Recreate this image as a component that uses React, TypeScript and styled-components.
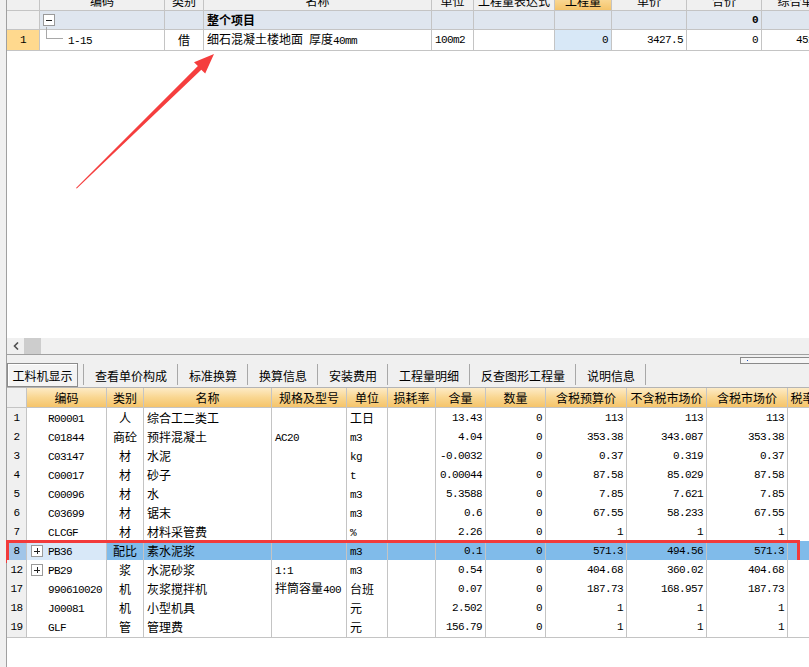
import React from 'react'
import styled, { createGlobalStyle } from 'styled-components'

const GlobalStyle = createGlobalStyle`
  html, body {
    margin: 0;
    padding: 0;
    background: #fff;
  }
  body {
    font-family: 'Noto Sans CJK SC', 'Liberation Sans', sans-serif;
    font-size: 12px;
    color: #000;
  }
`

const LINE = '#c4c4c4'
const ORANGE = 'linear-gradient(to bottom, #fdebc6 0%, #f9d690 50%, #f5c46a 100%)'

const Window = styled.div`
  position: relative;
  width: 809px;
  height: 667px;
  display: flex;
  overflow: hidden;
  background: #fff;
`

const LeftStrip = styled.div`
  flex: 0 0 6px;
  background: #f0f0f0;
  border-right: 1px solid #a0a0a0;
`

const Main = styled.div`
  flex: 1;
  min-width: 0;
  display: flex;
  flex-direction: column;
`

const TopPane = styled.div`
  flex: 0 0 338px;
  overflow: hidden;
`

const TopTable = styled.div`
  margin-top: -9px;
`

const Row = styled.div<{ $cols: string; $bg?: string; $h?: number }>`
  position: relative;
  display: grid;
  grid-template-columns: ${(p) => p.$cols};
  height: ${(p) => p.$h || 19}px;
  background: ${(p) => p.$bg || '#fff'};
`

const Cell = styled.div<{ $align?: 'left' | 'center' | 'right'; $bg?: string; $bold?: boolean }>`
  box-sizing: border-box;
  border-right: 1px solid ${LINE};
  border-bottom: 1px solid ${LINE};
  display: flex;
  align-items: center;
  justify-content: ${(p) => (p.$align === 'right' ? 'flex-end' : p.$align === 'center' ? 'center' : 'flex-start')};
  padding: 0 3px;
  white-space: nowrap;
  line-height: 18px;
  background: ${(p) => p.$bg || 'transparent'};
  font-weight: ${(p) => (p.$bold ? 700 : 400)};
`

const HeadCell = styled(Cell)<{ $hot?: boolean }>`
  justify-content: center;
  background: ${(p) => (p.$hot ? ORANGE : '#f0f0f0')};
`

const Mono = styled.span`
  font-family: 'Liberation Mono', 'DejaVu Sans Mono', monospace;
  font-size: 11px;
  letter-spacing: -0.6px;
  white-space: pre;
`

const ToggleBox = styled.span<{ $open?: boolean }>`
  position: relative;
  flex: 0 0 auto;
  box-sizing: border-box;
  width: 12px;
  height: 12px;
  border: 1px solid #9a9a9a;
  background: #fff;

  &::before {
    content: '';
    position: absolute;
    left: 2px;
    right: 2px;
    top: 4.5px;
    height: 1px;
    background: #222;
  }

  &::after {
    content: '';
    display: ${(p) => (p.$open ? 'none' : 'block')};
    position: absolute;
    top: 2px;
    bottom: 2px;
    left: 4.5px;
    width: 1px;
    background: #222;
  }
`

const BoxSpacer = styled.span`
  flex: 0 0 12px;
`

const Elbow = styled.span`
  align-self: flex-start;
  flex: 0 0 17px;
  height: 12px;
  margin: -3px 0 0 3px;
  box-sizing: border-box;
  border-left: 1px solid #a8a8a8;
  border-bottom: 1px solid #a8a8a8;
`

const CodeText = styled.span`
  margin-left: 5px;
`

const ScrollBar = styled.div`
  flex: 0 0 17px;
  box-sizing: border-box;
  background: #f0f0f0;
  border-bottom: 1px solid #a0a0a0;
  display: flex;
`

const ScrollArrow = styled.div`
  width: 17px;
  display: flex;
  align-items: center;
  justify-content: center;
`

const ScrollThumb = styled.div`
  width: 17px;
  background: #cdcdcd;
`

const TabBar = styled.div`
  flex: 0 0 33px;
  box-sizing: border-box;
  padding-top: 8px;
  background: #f0f0f0;
  border-bottom: 1px solid #b4b4b4;
  display: flex;
  align-items: flex-start;
`

const Tab = styled.div<{ $active?: boolean }>`
  box-sizing: border-box;
  height: 24px;
  display: flex;
  align-items: center;
  justify-content: center;
  white-space: nowrap;
  ${(p) =>
    p.$active
      ? `
    width: 71px;
    border: 1px solid #8c8c8c;
    box-shadow: inset 1px 1px 0 #fff;
    background: #f4f4f4;
    margin-right: 5px;
  `
      : `
    padding: 0 10px 0 11px;
  `}
`

const TabSep = styled.div`
  width: 1px;
  height: 21px;
  margin-top: 1px;
  background: #a8a8a8;
`

const Splitter = styled.div`
  margin: -6px 0 0 auto;
  box-sizing: border-box;
  width: 69px;
  height: 7px;
  border: 1px solid #8a8a8a;
  border-right: none;
  background: #f6f6f6;
  display: flex;
  align-items: center;
  padding-left: 6px;

  &::before {
    content: '';
    width: 1px;
    height: 1px;
    background: #2050c0;
  }
`

const BottomPane = styled.div`
  flex: 1;
  background: #fff;
`

const RedFrame = styled.div`
  position: absolute;
  left: -1px;
  top: -1px;
  width: 794px;
  height: 23px;
  box-sizing: border-box;
  border: 3px solid #f23b3b;
  pointer-events: none;
`

const ArrowLayer = styled.svg`
  position: absolute;
  left: 0;
  top: 0;
  pointer-events: none;
`

// mixed Chinese / ASCII text: ASCII runs use the narrow mono face
const Txt = ({ s }: { s: string }) => (
  <span>
    {s
      .split(/([\x20-\x7e]+)/)
      .filter(Boolean)
      .map((part, i) =>
        /^[\x20-\x7e]+$/.test(part) ? <Mono key={i}>{part}</Mono> : <React.Fragment key={i}>{part}</React.Fragment>,
      )}
  </span>
)

const TOP_COLS = '33px 125px 39px 228px 42px 81px 57px 75px 75px 80px'
const TOP_HEAD = ['', '编码', '类别', '名称', '单位', '工程量表达式', '工程量', '单价', '合价', '综合单价']

const BOT_COLS = '20px 80px 37px 128px 75px 41px 48px 50px 60px 81px 80px 81px 30px'
const BOT_HEAD = ['', '编码', '类别', '名称', '规格及型号', '单位', '损耗率', '含量', '数量', '含税预算价', '不含税市场价', '含税市场价', '税率']

type Item = {
  n: string
  code: string
  type: string
  name: string
  spec?: string
  unit: string
  qty: string
  p1: string
  p2: string
  p3: string
  expand?: boolean
  selected?: boolean
}

const items: Item[] = [
  { n: '1', code: 'R00001', type: '人', name: '综合工二类工', unit: '工日', qty: '13.43', p1: '113', p2: '113', p3: '113' },
  { n: '2', code: 'C01844', type: '商砼', name: '预拌混凝土', spec: 'AC20', unit: 'm3', qty: '4.04', p1: '353.38', p2: '343.087', p3: '353.38' },
  { n: '3', code: 'C03147', type: '材', name: '水泥', unit: 'kg', qty: '-0.0032', p1: '0.37', p2: '0.319', p3: '0.37' },
  { n: '4', code: 'C00017', type: '材', name: '砂子', unit: 't', qty: '0.00044', p1: '87.58', p2: '85.029', p3: '87.58' },
  { n: '5', code: 'C00096', type: '材', name: '水', unit: 'm3', qty: '5.3588', p1: '7.85', p2: '7.621', p3: '7.85' },
  { n: '6', code: 'C03699', type: '材', name: '锯末', unit: 'm3', qty: '0.6', p1: '67.55', p2: '58.233', p3: '67.55' },
  { n: '7', code: 'CLCGF', type: '材', name: '材料采管费', unit: '%', qty: '2.26', p1: '1', p2: '1', p3: '1' },
  { n: '8', code: 'PB36', type: '配比', name: '素水泥浆', unit: 'm3', qty: '0.1', p1: '571.3', p2: '494.56', p3: '571.3', expand: true, selected: true },
  { n: '12', code: 'PB29', type: '浆', name: '水泥砂浆', spec: '1:1', unit: 'm3', qty: '0.54', p1: '404.68', p2: '360.02', p3: '404.68', expand: true },
  { n: '17', code: '990610020', type: '机', name: '灰浆搅拌机', spec: '拌筒容量400', unit: '台班', qty: '0.07', p1: '187.73', p2: '168.957', p3: '187.73' },
  { n: '18', code: 'J00081', type: '机', name: '小型机具', unit: '元', qty: '2.502', p1: '1', p2: '1', p3: '1' },
  { n: '19', code: 'GLF', type: '管', name: '管理费', unit: '元', qty: '156.79', p1: '1', p2: '1', p3: '1' },
]

const tabs = ['查看单价构成', '标准换算', '换算信息', '安装费用', '工程量明细', '反查图形工程量', '说明信息']

const MaterialRow = ({ item }: { item: Item }) => (
  <Row $cols={BOT_COLS} $bg={item.selected ? '#80bbea' : '#fff'}>
    <Cell $align='center' $bg={item.selected ? '#a0c5e8' : '#f0f0f0'}>
      <Mono>{item.n}</Mono>
    </Cell>
    <Cell $bg={item.selected ? '#d8e8f8' : undefined} style={{ paddingLeft: 4 }}>
      {item.expand ? <ToggleBox /> : <BoxSpacer />}
      <CodeText>
        <Mono>{item.code}</Mono>
      </CodeText>
    </Cell>
    <Cell $align='center'>{item.type}</Cell>
    <Cell>{item.name}</Cell>
    <Cell>{item.spec ? <Txt s={item.spec} /> : null}</Cell>
    <Cell>
      <Txt s={item.unit} />
    </Cell>
    <Cell />
    <Cell $align='right'>
      <Mono>{item.qty}</Mono>
    </Cell>
    <Cell $align='right'>
      <Mono>0</Mono>
    </Cell>
    <Cell $align='right'>
      <Mono>{item.p1}</Mono>
    </Cell>
    <Cell $align='right'>
      <Mono>{item.p2}</Mono>
    </Cell>
    <Cell $align='right'>
      <Mono>{item.p3}</Mono>
    </Cell>
    <Cell />
    {item.selected && <RedFrame />}
  </Row>
)

const App = () => {
  return (
    <Window>
      <GlobalStyle />
      <LeftStrip />
      <Main>
        <TopPane>
          <TopTable>
            <Row $cols={TOP_COLS} $h={20} $bg='#f0f0f0'>
              {TOP_HEAD.map((h, i) => (
                <HeadCell key={i} $hot={h === '工程量'}>
                  {h}
                </HeadCell>
              ))}
            </Row>
            <Row $cols={TOP_COLS} $bg='#dfe6ef'>
              <Cell $bg='#f0f0f0' />
              <Cell>
                <ToggleBox $open />
              </Cell>
              <Cell />
              <Cell $bold>整个项目</Cell>
              <Cell />
              <Cell />
              <Cell />
              <Cell />
              <Cell $align='right' $bold>
                <Mono>0</Mono>
              </Cell>
              <Cell />
            </Row>
            <Row $cols={TOP_COLS}>
              <Cell $align='center' $bg='#ffd98e'>
                <Mono>1</Mono>
              </Cell>
              <Cell>
                <Elbow />
                <CodeText>
                  <Mono>1-15</Mono>
                </CodeText>
              </Cell>
              <Cell $align='center'>借</Cell>
              <Cell>
                <Txt s='细石混凝土楼地面 厚度40mm' />
              </Cell>
              <Cell>
                <Mono>100m2</Mono>
              </Cell>
              <Cell />
              <Cell $align='right' $bg='#d8e8f7'>
                <Mono>0</Mono>
              </Cell>
              <Cell $align='right'>
                <Mono>3427.5</Mono>
              </Cell>
              <Cell $align='right'>
                <Mono>0</Mono>
              </Cell>
              <Cell $align='right'>
                <Mono>4516.35</Mono>
              </Cell>
            </Row>
          </TopTable>
        </TopPane>

        <ScrollBar>
          <ScrollArrow>
            <svg width='6' height='8' viewBox='0 0 6 8'>
              <polyline points='5,0.5 1.5,4 5,7.5' fill='none' stroke='#505050' strokeWidth='1.6' />
            </svg>
          </ScrollArrow>
          <ScrollThumb />
        </ScrollBar>

        <TabBar>
          <Tab $active>工料机显示</Tab>
          {tabs.map((t) => (
            <React.Fragment key={t}>
              <TabSep />
              <Tab>{t}</Tab>
            </React.Fragment>
          ))}
          <TabSep />
          <Splitter />
        </TabBar>

        <BottomPane>
          <Row $cols={BOT_COLS} $h={20} $bg='#f0f0f0'>
            {BOT_HEAD.map((h, i) => (
              <HeadCell key={i} $hot={i > 0}>
                {h}
              </HeadCell>
            ))}
          </Row>
          {items.map((item) => (
            <MaterialRow key={item.n} item={item} />
          ))}
        </BottomPane>
      </Main>

      <ArrowLayer width='809' height='667' viewBox='0 0 809 667'>
        <polygon
          points='76,188 197.9,66.1 194,62.2 214,54 205.2,73.6 201.3,69.7 76.8,188.6'
          fill='#f53e3e'
        />
      </ArrowLayer>
    </Window>
  )
}

export default App
